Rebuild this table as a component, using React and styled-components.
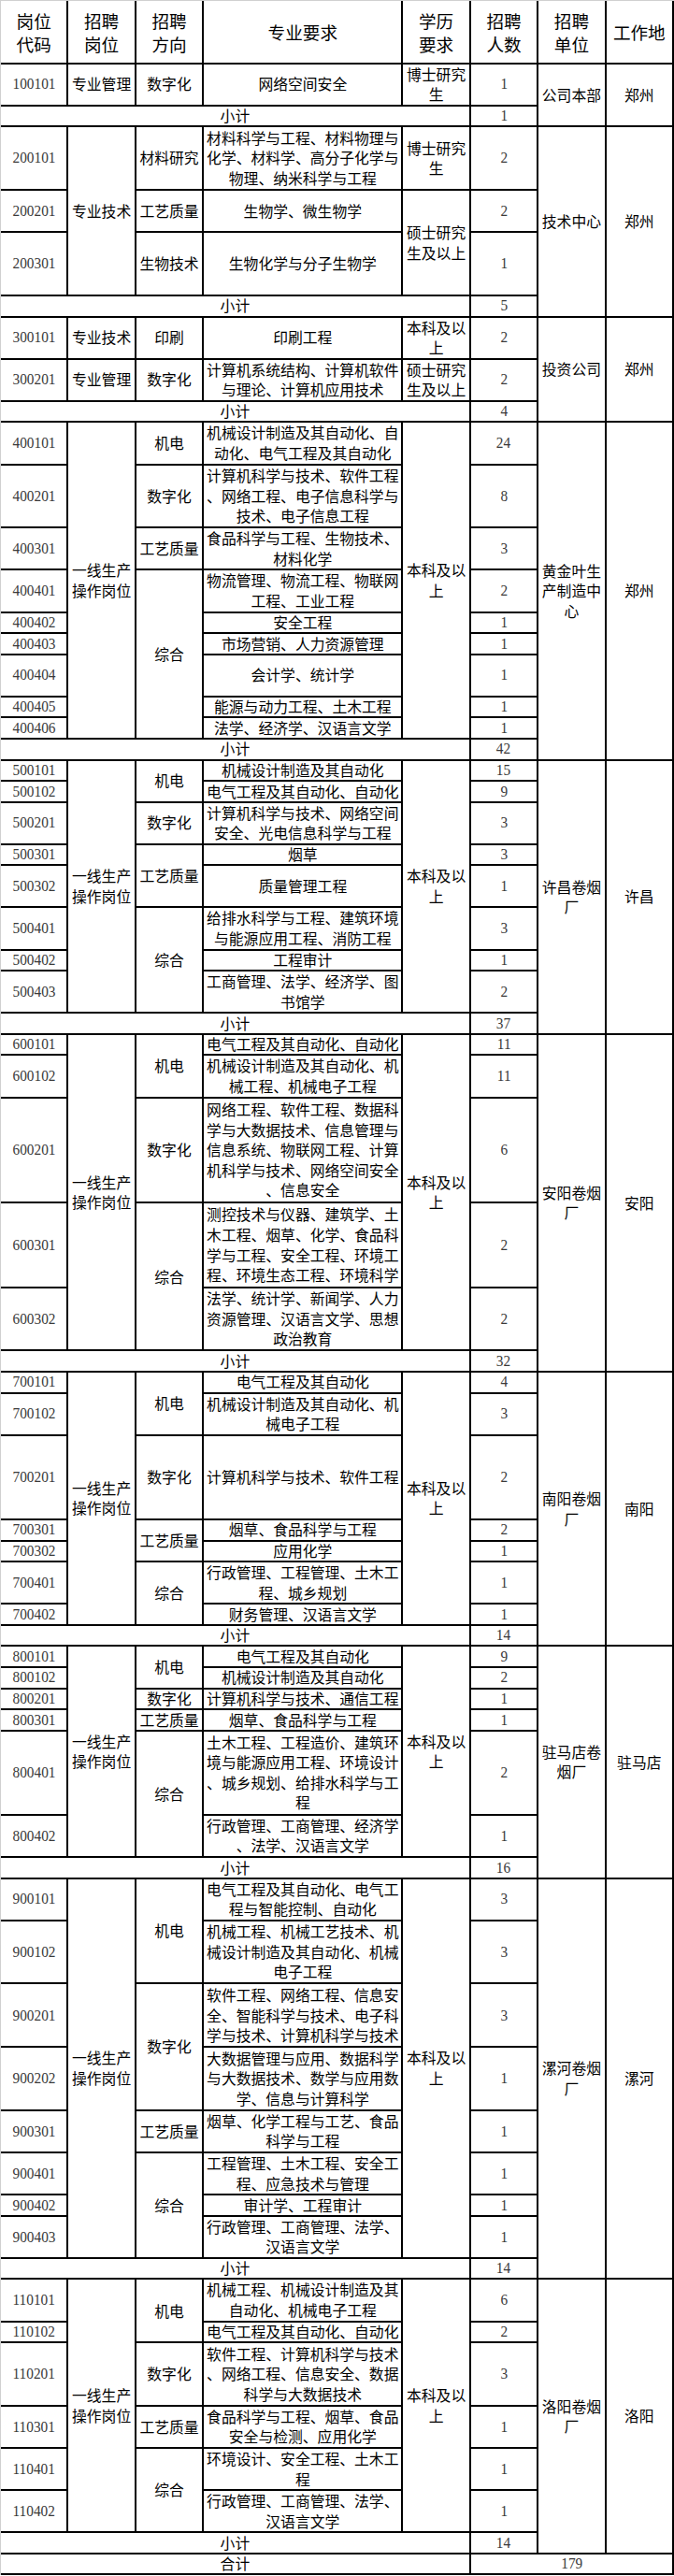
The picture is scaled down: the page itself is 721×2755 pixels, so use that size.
import React from 'react'
import styled, { createGlobalStyle } from 'styled-components'

// one text line of the sheet, and the grid line between cells
const UNIT = 20.574
const LINE = 2

const GlobalStyle = createGlobalStyle`
  html, body {
    margin: 0;
    padding: 0;
    background: #fff;
  }
  body {
    font-family: "Noto Sans CJK SC", "Noto Sans", sans-serif;
    color: #000;
  }
`

const Sheet = styled.div`
  display: grid;
  grid-template-columns: 1fr 1fr 1fr 3fr 1fr 1fr 1fr 1fr;
  grid-template-rows: ${p => p.$rows};
  gap: ${LINE}px;
  width: 721px;
  box-sizing: border-box;
  background: #000;
  border-top: 1px solid #d0d0d0;
  border-left: 1px solid #d0d0d0;
  padding: 0 ${LINE}px ${LINE}px 0;
`

const Cell = styled.div`
  grid-row: span ${p => p.$rs};
  grid-column: span ${p => p.$cs};
  background: #fff;
  display: flex;
  flex-direction: column;
  align-items: center;
  justify-content: center;
  text-align: center;
  font-size: 15.8px;
  line-height: 21.6px;
  white-space: nowrap;
  min-width: 0;
`

const HeadCell = styled(Cell)`
  font-size: 18.6px;
  line-height: 25px;
`

const Line = styled.span`
  display: block;
`

const Digits = styled.span`
  display: inline-block;
  font-family: "Liberation Serif", "Times New Roman", serif;
  font-size: 17px;
  color: #3a3a3a;
  transform: scaleX(0.9);
`

const cell = k => (t, rs = 1, cs = 1) => ({ k, t, rs, cs })
const H = cell('head')
const T = cell('text')
const K = cell('digits')
const N = cell('digits')
const sub = n => ({ h: 1, cells: [T('小计', 1, 5), N(n)] })

const rows = [
  { h: 3, cells: [H('岗位|代码'), H('招聘|岗位'), H('招聘|方向'), H('专业要求'), H('学历|要求'), H('招聘|人数'), H('招聘|单位'), H('工作地')] },

  // 公司本部
  { h: 2, cells: [K('100101'), T('专业管理'), T('数字化'), T('网络空间安全'), T('博士研究|生'), N('1'), T('公司本部', 2), T('郑州', 2)] },
  sub('1'),

  // 技术中心
  { h: 3, cells: [K('200101'), T('专业技术', 3), T('材料研究'), T('材料科学与工程、材料物理与|化学、材料学、高分子化学与|物理、纳米科学与工程'), T('博士研究|生'), N('2'), T('技术中心', 4), T('郑州', 4)] },
  { h: 2, cells: [K('200201'), T('工艺质量'), T('生物学、微生物学'), T('硕士研究|生及以上', 2), N('2')] },
  { h: 3, cells: [K('200301'), T('生物技术'), T('生物化学与分子生物学'), N('1')] },
  sub('5'),

  // 投资公司
  { h: 2, cells: [K('300101'), T('专业技术'), T('印刷'), T('印刷工程'), T('本科及以|上'), N('2'), T('投资公司', 3), T('郑州', 3)] },
  { h: 2, cells: [K('300201'), T('专业管理'), T('数字化'), T('计算机系统结构、计算机软件|与理论、计算机应用技术'), T('硕士研究|生及以上'), N('2')] },
  sub('4'),

  // 黄金叶生产制造中心
  { h: 2, cells: [K('400101'), T('一线生产|操作岗位', 9), T('机电'), T('机械设计制造及其自动化、自|动化、电气工程及其自动化'), T('本科及以|上', 9), N('24'), T('黄金叶生|产制造中|心', 10), T('郑州', 10)] },
  { h: 3, cells: [K('400201'), T('数字化'), T('计算机科学与技术、软件工程|、网络工程、电子信息科学与|技术、电子信息工程'), N('8')] },
  { h: 2, cells: [K('400301'), T('工艺质量'), T('食品科学与工程、生物技术、|材料化学'), N('3')] },
  { h: 2, cells: [K('400401'), T('综合', 6), T('物流管理、物流工程、物联网|工程、工业工程'), N('2')] },
  { h: 1, cells: [K('400402'), T('安全工程'), N('1')] },
  { h: 1, cells: [K('400403'), T('市场营销、人力资源管理'), N('1')] },
  { h: 2, cells: [K('400404'), T('会计学、统计学'), N('1')] },
  { h: 1, cells: [K('400405'), T('能源与动力工程、土木工程'), N('1')] },
  { h: 1, cells: [K('400406'), T('法学、经济学、汉语言文学'), N('1')] },
  sub('42'),

  // 许昌卷烟厂
  { h: 1, cells: [K('500101'), T('一线生产|操作岗位', 8), T('机电', 2), T('机械设计制造及其自动化'), T('本科及以|上', 8), N('15'), T('许昌卷烟|厂', 9), T('许昌', 9)] },
  { h: 1, cells: [K('500102'), T('电气工程及其自动化、自动化'), N('9')] },
  { h: 2, cells: [K('500201'), T('数字化'), T('计算机科学与技术、网络空间|安全、光电信息科学与工程'), N('3')] },
  { h: 1, cells: [K('500301'), T('工艺质量', 2), T('烟草'), N('3')] },
  { h: 2, cells: [K('500302'), T('质量管理工程'), N('1')] },
  { h: 2, cells: [K('500401'), T('综合', 3), T('给排水科学与工程、建筑环境|与能源应用工程、消防工程'), N('3')] },
  { h: 1, cells: [K('500402'), T('工程审计'), N('1')] },
  { h: 2, cells: [K('500403'), T('工商管理、法学、经济学、图|书馆学'), N('2')] },
  sub('37'),

  // 安阳卷烟厂
  { h: 1, cells: [K('600101'), T('一线生产|操作岗位', 5), T('机电', 2), T('电气工程及其自动化、自动化'), T('本科及以|上', 5), N('11'), T('安阳卷烟|厂', 6), T('安阳', 6)] },
  { h: 2, cells: [K('600102'), T('机械设计制造及其自动化、机|械工程、机械电子工程'), N('11')] },
  { h: 5, cells: [K('600201'), T('数字化'), T('网络工程、软件工程、数据科|学与大数据技术、信息管理与|信息系统、物联网工程、计算|机科学与技术、网络空间安全|、信息安全'), N('6')] },
  { h: 4, cells: [K('600301'), T('综合', 2), T('测控技术与仪器、建筑学、土|木工程、烟草、化学、食品科|学与工程、安全工程、环境工|程、环境生态工程、环境科学'), N('2')] },
  { h: 3, cells: [K('600302'), T('法学、统计学、新闻学、人力|资源管理、汉语言文学、思想|政治教育'), N('2')] },
  sub('32'),

  // 南阳卷烟厂
  { h: 1, cells: [K('700101'), T('一线生产|操作岗位', 7), T('机电', 2), T('电气工程及其自动化'), T('本科及以|上', 7), N('4'), T('南阳卷烟|厂', 8), T('南阳', 8)] },
  { h: 2, cells: [K('700102'), T('机械设计制造及其自动化、机|械电子工程'), N('3')] },
  { h: 4, cells: [K('700201'), T('数字化'), T('计算机科学与技术、软件工程'), N('2')] },
  { h: 1, cells: [K('700301'), T('工艺质量', 2), T('烟草、食品科学与工程'), N('2')] },
  { h: 1, cells: [K('700302'), T('应用化学'), N('1')] },
  { h: 2, cells: [K('700401'), T('综合', 2), T('行政管理、工程管理、土木工|程、城乡规划'), N('1')] },
  { h: 1, cells: [K('700402'), T('财务管理、汉语言文学'), N('1')] },
  sub('14'),

  // 驻马店卷烟厂
  { h: 1, cells: [K('800101'), T('一线生产|操作岗位', 6), T('机电', 2), T('电气工程及其自动化'), T('本科及以|上', 6), N('9'), T('驻马店卷|烟厂', 7), T('驻马店', 7)] },
  { h: 1, cells: [K('800102'), T('机械设计制造及其自动化'), N('2')] },
  { h: 1, cells: [K('800201'), T('数字化'), T('计算机科学与技术、通信工程'), N('1')] },
  { h: 1, cells: [K('800301'), T('工艺质量'), T('烟草、食品科学与工程'), N('1')] },
  { h: 4, cells: [K('800401'), T('综合', 2), T('土木工程、工程造价、建筑环|境与能源应用工程、环境设计|、城乡规划、给排水科学与工|程'), N('2')] },
  { h: 2, cells: [K('800402'), T('行政管理、工商管理、经济学|、法学、汉语言文学'), N('1')] },
  sub('16'),

  // 漯河卷烟厂
  { h: 2, cells: [K('900101'), T('一线生产|操作岗位', 8), T('机电', 2), T('电气工程及其自动化、电气工|程与智能控制、自动化'), T('本科及以|上', 8), N('3'), T('漯河卷烟|厂', 9), T('漯河', 9)] },
  { h: 3, cells: [K('900102'), T('机械工程、机械工艺技术、机|械设计制造及其自动化、机械|电子工程'), N('3')] },
  { h: 3, cells: [K('900201'), T('数字化', 2), T('软件工程、网络工程、信息安|全、智能科学与技术、电子科|学与技术、计算机科学与技术'), N('3')] },
  { h: 3, cells: [K('900202'), T('大数据管理与应用、数据科学|与大数据技术、数学与应用数|学、信息与计算科学'), N('1')] },
  { h: 2, cells: [K('900301'), T('工艺质量'), T('烟草、化学工程与工艺、食品|科学与工程'), N('1')] },
  { h: 2, cells: [K('900401'), T('综合', 3), T('工程管理、土木工程、安全工|程、应急技术与管理'), N('1')] },
  { h: 1, cells: [K('900402'), T('审计学、工程审计'), N('1')] },
  { h: 2, cells: [K('900403'), T('行政管理、工商管理、法学、|汉语言文学'), N('1')] },
  sub('14'),

  // 洛阳卷烟厂
  { h: 2, cells: [K('110101'), T('一线生产|操作岗位', 6), T('机电', 2), T('机械工程、机械设计制造及其|自动化、机械电子工程'), T('本科及以|上', 6), N('6'), T('洛阳卷烟|厂', 7), T('洛阳', 7)] },
  { h: 1, cells: [K('110102'), T('电气工程及其自动化、自动化'), N('2')] },
  { h: 3, cells: [K('110201'), T('数字化'), T('软件工程、计算机科学与技术|、网络工程、信息安全、数据|科学与大数据技术'), N('3')] },
  { h: 2, cells: [K('110301'), T('工艺质量'), T('食品科学与工程、烟草、食品|安全与检测、应用化学'), N('1')] },
  { h: 2, cells: [K('110401'), T('综合', 2), T('环境设计、安全工程、土木工|程'), N('1')] },
  { h: 2, cells: [K('110402'), T('行政管理、工商管理、法学、|汉语言文学'), N('1')] },
  sub('14'),

  { h: 1, cells: [T('合计', 1, 5), N('179', 1, 3)] },
]

const trackSizes = rows
  .map(r => `${(r.h * UNIT + (r.h - 1) * LINE).toFixed(3)}px`)
  .join(' ')

const renderCell = (c, key) => {
  if (c.k === 'digits') {
    return (
      <Cell key={key} $rs={c.rs} $cs={c.cs}>
        <Digits>{c.t}</Digits>
      </Cell>
    )
  }
  const Box = c.k === 'head' ? HeadCell : Cell
  return (
    <Box key={key} $rs={c.rs} $cs={c.cs}>
      {c.t.split('|').map((l, i) => (
        <Line key={i}>{l}</Line>
      ))}
    </Box>
  )
}

const App = () => {
  return (
    <>
      <GlobalStyle />
      <Sheet $rows={trackSizes}>
        {rows.flatMap((r, i) => r.cells.map((c, j) => renderCell(c, `${i}-${j}`)))}
      </Sheet>
    </>
  )
}

export default App
